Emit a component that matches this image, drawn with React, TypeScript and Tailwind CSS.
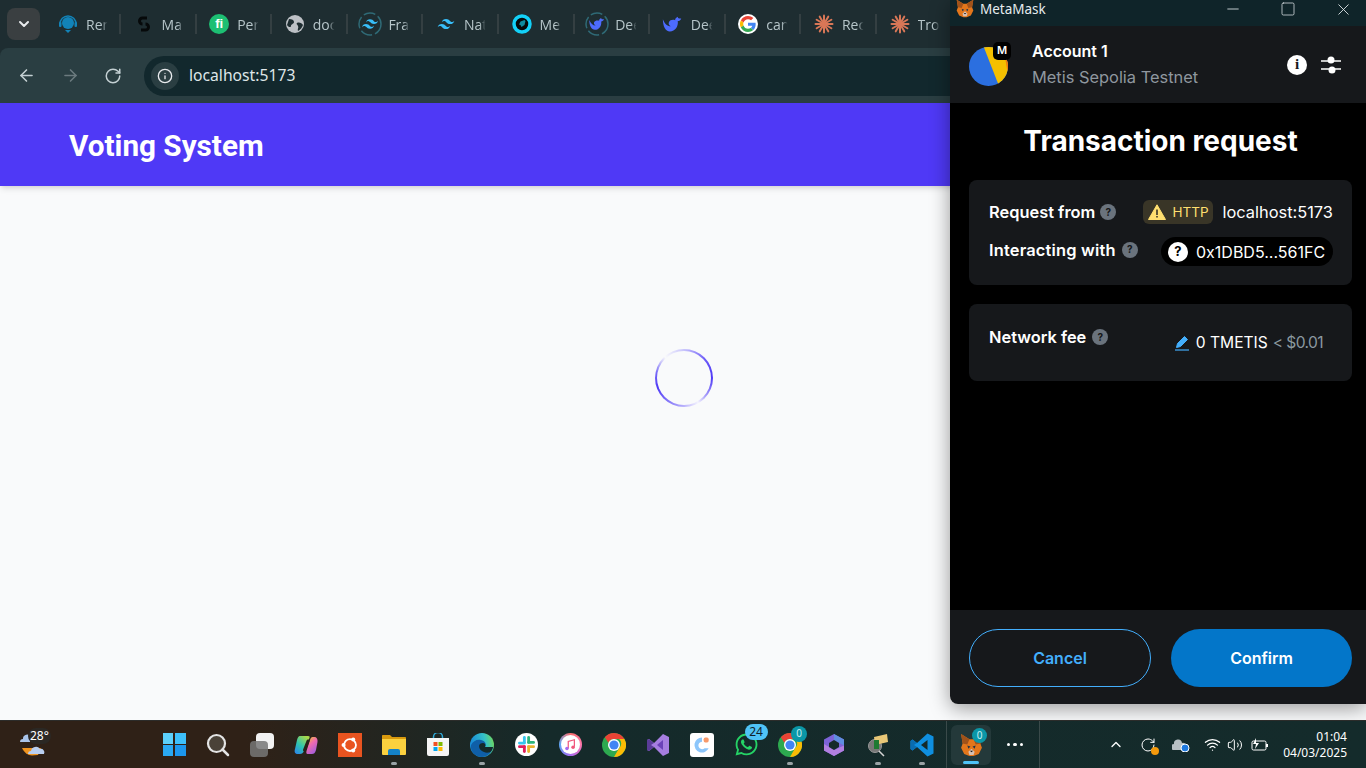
import React from "react";
import { ArrowLeft, ArrowRight, ChevronDown, ChevronUp, Info, Minus, RotateCw, Square, Volume2, Wifi, X } from "lucide-react";
import { FaWhatsapp } from "react-icons/fa";

const Dot = ({ c, x, y, r }: { c: string; x: number; y: number; r: number }) => <circle cx={x} cy={y} r={r} fill={c} />;

const Headset = () => (
  <svg viewBox="0 0 20 20" className="w-5 h-5">
    <circle cx="10" cy="9" r="6" fill="#1283b8" />
    <path d="M2 10a8 8 0 0 1 16 0" fill="none" stroke="#1283b8" strokeWidth="1.5" />
    <path d="M7 16l3 3 3-3z" fill="#1283b8" />
    <rect x="1" y="8" width="2.5" height="5" rx="1" fill="#1283b8" />
    <rect x="16.5" y="8" width="2.5" height="5" rx="1" fill="#1283b8" />
  </svg>
);

const DarkS = () => (
  <svg viewBox="0 0 20 20" className="w-5 h-5">
    <path d="M13 4H8.5a2.5 2.5 0 0 0 0 6M7 16h4.500a2.500 2.500 0 0 0 0-6" fill="none" stroke="#06090a" strokeWidth="3" />
  </svg>
);

const Fiverr = () => (
  <div className="w-5 h-5 rounded-full bg-[#1dbf73] text-white flex items-center justify-center font-bold text-[13px] font-['Liberation_Sans',sans-serif]">
    fi
  </div>
);

const Globe = () => (
  <svg viewBox="0 0 20 20" className="w-5 h-5">
    <circle cx="10" cy="10" r="9" fill="#bdc1c6" />
    <path d="M4 5c3 0 5 1 5 3s-3 2-3 4-3 1-4-1zM12 9c2-1 5 0 6 2-1 3-3 5-5 6-1-2 1-3 0-5s-2-2-1-3z" fill="#1e2d31" />
  </svg>
);

const twPath =
  "M12 6c-2.667 0-4.333 1.333-5 4 1-1.333 2.167-1.833 3.500-1.500.761.190 1.305.742 1.906 1.352C13.387 10.848 14.522 12 17 12c2.667 0 4.333-1.333 5-4-1 1.333-2.167 1.833-3.500 1.500-.761-.190-1.305-.742-1.906-1.352C15.613 7.152 14.478 6 12 6zM7 12c-2.667 0-4.333 1.333-5 4 1-1.333 2.167-1.833 3.500-1.500.761.190 1.305.742 1.906 1.352C8.387 16.848 9.522 18 12 18c2.667 0 4.333-1.333 5-4-1 1.333-2.167 1.833-3.500 1.500-.761-.190-1.305-.742-1.906-1.352C10.613 13.152 9.478 12 7 12z";

const Tailwind = ({ ring }: { ring?: boolean }) => (
  <svg viewBox="0 0 24 24" className={ring ? "w-6 h-6" : "w-5 h-5"}>
    {ring && <circle cx="12" cy="12" r="11" fill="none" stroke="#2f6a76" strokeWidth="1.500" strokeDasharray="12 3" />}
    <path d={twPath} fill="#38bdf8" transform={ring ? "translate(2.400 2.400) scale(0.8)" : undefined} />
  </svg>
);

const Rocket = () => (
  <svg viewBox="0 0 20 20" className="w-5 h-5">
    <circle cx="10" cy="10" r="8" fill="#06090a" stroke="#13d0f7" strokeWidth="3.500" />
    <path d="M12.500 6l1 1-1 4-3 2-1-2-1.500-.5 1.500-3z" fill="#0f8a9e" />
  </svg>
);

const whalePath = "M1 6c2 5 5 8 9 8-2-1-3-3-2-5 1-2 4-3 7-2 0-2 1-3 3-4 0 2 1 2 4 2-1 2-2 3-4 3 1 6-3 12-9 12-5 0-8-6-8-14z";

const Whale = ({ ring }: { ring?: boolean }) => (
  <svg viewBox="0 0 24 24" className={ring ? "w-6 h-6" : "w-[21px] h-[21px]"}>
    {ring && <circle cx="12" cy="12" r="11" fill="none" stroke="#2f6a76" strokeWidth="1.500" strokeDasharray="12 3" />}
    <path d={whalePath} fill="#4d6bfe" transform={ring ? "translate(3.600 3.800) scale(0.7)" : undefined} />
  </svg>
);

const GoogleG = () => (
  <div className="w-5 h-5 rounded-full bg-white flex items-center justify-center">
    <svg viewBox="0 0 48 48" className="w-4 h-4">
      <path fill="#EA4335" d="M24 9.500c3.500 0 6.700 1.200 9.200 3.600l6.900-6.900C35.900 2.400 30.500 0 24 0 14.600 0 6.500 5.400 2.600 13.200l8 6.200C12.400 13.700 17.700 9.500 24 9.500z" />
      <path fill="#4285F4" d="M47 24.500c0-1.600-.1-3.100-.4-4.500H24v9h12.900c-.6 3-2.200 5.400-4.700 7.100l7.700 6C44.400 38 47 31.800 47 24.500z" />
      <path fill="#FBBC05" d="M10.500 28.600a14.500 14.500 0 0 1 0-9.200l-8-6.200a24 24 0 0 0 0 21.600z" />
      <path fill="#34A853" d="M24 48c6.500 0 11.900-2.100 15.900-5.900l-7.700-6c-2.200 1.400-5 2.300-8.200 2.300-6.300 0-11.600-4.200-13.500-10l-8 6.200C6.500 42.600 14.600 48 24 48z" />
    </svg>
  </div>
);

const Claude = () => (
  <svg viewBox="0 0 20 20" className="w-5 h-5">
    {[0, 30, 60, 90, 120, 150, 180, 210, 240, 270, 300, 330].map((a) => (
      <rect key={a} x="9" y="0.500" width="2" height="9.500" rx="1" fill="#d97757" transform={`rotate(${a} 10 10)`} />
    ))}
  </svg>
);

const tabs: { icon: React.ReactNode; label: string }[] = [
  { icon: <Headset />, label: "Ren" },
  { icon: <DarkS />, label: "Ma" },
  { icon: <Fiverr />, label: "Per" },
  { icon: <Globe />, label: "doc" },
  { icon: <Tailwind ring />, label: "Fra" },
  { icon: <Tailwind />, label: "Nat" },
  { icon: <Rocket />, label: "Me" },
  { icon: <Whale ring />, label: "Dee" },
  { icon: <Whale />, label: "Dee" },
  { icon: <GoogleG />, label: "can" },
  { icon: <Claude />, label: "Rec" },
  { icon: <Claude />, label: "Tro" },
];

const TabStrip = () => (
  <div className="h-[48px] bg-[#1e2d31] flex items-center pl-[7px] shrink-0">
    <div className="w-[33px] h-[32px] rounded-lg bg-[#3a3f41] flex items-center justify-center mr-[16px]">
      <ChevronDown size={16} strokeWidth={3} color="#e8eaed" />
    </div>
    {tabs.map((t, i) => (
      <div key={i} className="w-[75.600px] h-[24px] flex items-center shrink-0">
        <div className="w-[24px] flex justify-center shrink-0">{t.icon}</div>
        <div className="ml-[6px] w-[24px] whitespace-nowrap text-[14px] text-[#b6c5c9] font-['Open_Sans',sans-serif] [mask-image:linear-gradient(to_right,black_65%,transparent_90%)]">
          {t.label}
        </div>
        {i < tabs.length - 1 && <div className="ml-[9px] w-[2px] h-[20px] bg-[#343f42]" />}
      </div>
    ))}
  </div>
);

const Toolbar = () => (
  <div className="h-[55px] bg-[#1e2d31] shrink-0">
    <div className="h-full rounded-t-lg bg-[#2a3e42] flex items-center pl-[17px]">
      <ArrowLeft size={19} color="#c4d0d3" strokeWidth={2} />
      <ArrowRight size={19} color="#6b7a7e" strokeWidth={2} className="ml-[25px]" />
      <RotateCw size={18} color="#c4d0d3" strokeWidth={2} className="ml-[24px]" />
      <div className="ml-[22px] flex-1 h-[40px] rounded-full bg-[#12282d] flex items-center pl-[7px] text-[15.700px] text-[#dfe6e8] font-['Noto_Sans',sans-serif]">
        <div className="w-[28px] h-[28px] rounded-full bg-[#2a3e42] flex items-center justify-center mr-[10px]">
          <Info size={16} color="#e8eaed" strokeWidth={2} />
        </div>
        <span>localhost:5173</span>
      </div>
    </div>
  </div>
);

const Spinner = () => (
  <div className="w-[58px] h-[58px] rounded-full p-[2px] bg-[conic-gradient(#c8c4fc_0deg,#6a58f8_50deg,#4f39f6_90deg,#a89ffa_130deg,#f4f3fe_150deg,#b0a8fb_185deg,#4f39f6_250deg,#7567f8_280deg,#f9fafb_318deg,#c8c4fc_360deg)]">
    <div className="w-full h-full rounded-full bg-[#f9fafb]" />
  </div>
);

const Help = () => (
  <div className="w-[16px] h-[16px] rounded-full bg-[#6a737d] flex items-center justify-center text-[10px] font-bold text-[#141618]">?</div>
);

const Fox = ({ size }: { size: number }) => (
  <svg viewBox="0 0 24 24" width={size} height={size}>
    <path d="M2 2l8 5h4l8-5-1.500 9 1.500 4-3 6-5 2h-4l-5-2-3-6 1.500-4z" fill="#e2761b" />
    <path d="M2 2l8 5-2 5-4.500-1zM22 2l-8 5 2 5 4.500-1z" fill="#a0521a" />
    <path d="M8 13l3 1-2 2zM16 13l-3 1 2 2z" fill="#233447" />
    <path d="M9 19l3-3 3 3-1 3h-4z" fill="#d7c1b3" />
    <path d="M10.500 18h3l-1.500 1.500z" fill="#161616" />
  </svg>
);

const Avatar = () => (
  <svg viewBox="0 0 39 39" className="w-full h-full">
    <defs>
      <clipPath id="av">
        <circle cx="19.500" cy="19.500" r="19.500" />
      </clipPath>
    </defs>
    <g clipPath="url(#av)">
      <rect width="39" height="39" fill="#2b6fe0" />
      <path d="M14 -2L30 39H42V-2z" fill="#f5c000" />
      <path d="M36 10L42 8V30L38 22z" fill="#f0780f" />
    </g>
  </svg>
);

const MetaMaskWindow = () => (
  <div className="absolute left-[950px] top-0 w-[416px] h-[704px] flex flex-col rounded-bl-lg overflow-hidden shadow-[0_4px_20px_rgba(0,0,0,0.4)] font-['Inter',sans-serif] text-white">
    <div className="h-[26px] bg-[#0f2429] flex items-start shrink-0 pl-[5px] text-[#e6ecee] font-['Noto_Sans',sans-serif] text-[13.500px]">
      <div className="mt-[-2px]"><Fox size={20} /></div>
      <span className="ml-[5px] leading-[18px]">MetaMask</span>
      <div className="ml-auto flex items-center h-[18px] mr-[-5px]">
        <div className="w-[55px] flex justify-center"><Minus size={18} strokeWidth={1.100} /></div>
        <div className="w-[55px] flex justify-center mr-[1px]"><Square size={16} strokeWidth={1.100} /></div>
        <div className="w-[55px] flex justify-center"><X size={19} strokeWidth={1.100} /></div>
      </div>
    </div>
    <div className="h-[77px] bg-[#16181b] flex items-center shrink-0 pl-[19px] pr-[24px]">
      <div className="relative w-[39px] h-[39px] mt-[3px]">
        <Avatar />
        <div className="absolute left-[24px] top-[-5px] w-[18px] h-[18px] rounded-[5px] bg-black flex items-center justify-center text-[11px] font-semibold">M</div>
      </div>
      <div className="ml-[24px] mb-[2px] flex flex-col gap-[6px]">
        <div className="text-[16px] font-semibold leading-[20px]">Account 1</div>
        <div className="text-[16.400px] text-[#8f979f] leading-[20px]">Metis Sepolia Testnet</div>
      </div>
      <div className="ml-auto flex items-center gap-[11px]">
        <div className="mr-[2px] w-[20px] h-[20px] rounded-full bg-white text-[#16181b] flex items-center justify-center text-[15px] font-bold font-['Liberation_Serif',serif]">i</div>
        <svg viewBox="0 0 22 20" className="w-[22px] h-[20px]">
          <path d="M1 6h20M1 14h20" stroke="#fff" strokeWidth="1.500" />
          <circle cx="11" cy="5" r="3.500" fill="#fff" />
          <circle cx="12" cy="15" r="3.500" fill="#fff" />
        </svg>
      </div>
    </div>
    <div className="flex-1 bg-black px-[19px] pr-[14px]">
      <h1 className="text-center text-[28px] font-bold leading-[34px] mt-[21px] mb-[22px]">Transaction request</h1>
      <div className="h-[105px] rounded-lg bg-[#16181b] px-[20px] pt-[20px] text-[16.400px]">
        <div className="flex items-center h-[24px]">
          <span className="font-semibold">Request from</span>
          <span className="ml-[5px]"><Help /></span>
          <div className="ml-auto h-[24px] w-[70px] rounded-md bg-[#393527] flex items-center justify-center gap-[6px] text-[13.500px] text-[#ffdf70]">
            <svg viewBox="0 0 18 16" className="w-[18px] h-[16px]">
              <path d="M9 .800L17.500 15.500H.500z" fill="#ffdf70" stroke="#ffdf70" strokeLinejoin="round" />
              <path d="M8.200 5.500h1.600v5.500H8.200zM8.200 12h1.600v1.600H8.200z" fill="#393527" />
            </svg>
            HTTP
          </div>
          <span className="ml-[9px] mr-[-1px]">localhost:5173</span>
        </div>
        <div className="flex items-center h-[29px] mt-[13px]">
          <div className="flex items-center mb-[3px]">
            <span className="font-semibold tracking-[0.2px]">Interacting with</span>
            <span className="ml-[6px]"><Help /></span>
          </div>
          <div className="ml-auto h-[29px] w-[172px] rounded-full bg-black flex items-center pl-[7px] mr-[-1px] text-[16px]">
            <div className="w-[20px] h-[20px] rounded-full bg-white text-black flex items-center justify-center text-[13px] font-bold">?</div>
            <span className="ml-[8px]">0x1DBD5...561FC</span>
          </div>
        </div>
      </div>
      <div className="h-[77px] mt-[19px] rounded-lg bg-[#16181b] px-[20px] pt-[21px] flex items-start text-[16.400px]">
        <span className="font-semibold leading-[24px]">Network fee</span>
        <span className="ml-[6px] mt-[4px]"><Help /></span>
        <div className="ml-auto mt-[6px] flex items-center mr-[9px] leading-[24px] text-[15.600px]">
          <svg viewBox="0 0 16 16" className="w-[16px] h-[16px] mr-[6px]">
            <path d="M10.500 1.500l3 3L6.500 11.500 2.500 12.500l1-4z" fill="#43aefc" stroke="#43aefc" strokeLinejoin="round" />
            <path d="M1 15h14" stroke="#43aefc" strokeWidth="1.200" />
          </svg>
          <span>0 TMETIS</span>
          <span className="ml-[5px] text-[#8b99a0] tracking-[-0.600px]">&lt; $0.01</span>
        </div>
      </div>
    </div>
    <div className="h-[94px] bg-[#16181b] shrink-0 px-[19px] pr-[14px] pt-[19px] flex gap-[20px]">
      <button className="w-[182px] h-[58px] rounded-full border border-[#43aefc] text-[#43aefc] font-semibold text-[16px]">Cancel</button>
      <button className="w-[181px] h-[58px] rounded-full bg-[#0376c9] text-white font-semibold text-[16px]">Confirm</button>
    </div>
  </div>
);

const Pin = () => <div className="absolute bottom-[3px] left-1/2 -translate-x-1/2 w-[6px] h-[3px] rounded-full bg-[#9aa3a6]" />;

const Badge = ({ n, cls }: { n: string; cls: string }) => (
  <div className={`absolute flex items-center justify-center rounded-full text-[12px] font-['Noto_Sans',sans-serif] ${cls}`}>{n}</div>
);

const ChromeLogo = () => (
  <svg viewBox="0 0 24 24" className="w-6 h-6">
    <circle cx="12" cy="12" r="12" fill="#2da94f" />
    <path d="M12 0a12 12 0 0 1 10.400 6H12a6 6 0 0 0-5.600 3.800L2.800 4.300A12 12 0 0 1 12 0z" fill="#ea4335" />
    <path d="M22.400 6A12 12 0 0 1 12 24l5.200-9a6 6 0 0 0 0-9z" fill="#fbbc05" />
    <circle cx="12" cy="12" r="6" fill="#fff" />
    <circle cx="12" cy="12" r="4.600" fill="#4285f4" />
  </svg>
);

const taskIcons: { el: React.ReactNode; pin?: boolean }[] = [
  {
    el: (
      <div className="grid grid-cols-2 gap-[1.500px] w-[23px] h-[23px]">
        <div className="bg-[#5cd0fb]" /><div className="bg-[#3dc0fb]" /><div className="bg-[#2aa9f3]" /><div className="bg-[#1c97ee]" />
      </div>
    ),
  },
  {
    el: (
      <svg viewBox="0 0 24 24" className="w-6 h-6">
        <circle cx="10.500" cy="10.500" r="8.500" fill="#4a4238" stroke="#e4e4e4" strokeWidth="2.200" />
        <path d="M16.500 16.500L22 22" stroke="#e4e4e4" strokeWidth="2.500" strokeLinecap="round" />
      </svg>
    ),
  },
  {
    el: (
      <div className="relative w-[24px] h-[24px]">
        <div className="absolute right-0 top-0 w-[18px] h-[16px] rounded-sm bg-[#f2f2f2]" />
        <div className="absolute left-0 bottom-0 w-[18px] h-[16px] rounded-sm bg-[#777777]/85" />
      </div>
    ),
  },
  {
    el: (
      <svg viewBox="0 0 24 24" className="w-6 h-6">
        <defs>
          <linearGradient id="cpa" x1="0" y1="1" x2="0.700" y2="0">
            <stop offset="0" stopColor="#2b7ff0" />
            <stop offset="0.500" stopColor="#2ec4b0" />
            <stop offset="1" stopColor="#a8d84a" />
          </linearGradient>
          <linearGradient id="cpb" x1="0.200" y1="0" x2="0.800" y2="1">
            <stop offset="0" stopColor="#f0c030" />
            <stop offset="0.400" stopColor="#f06ab0" />
            <stop offset="1" stopColor="#9a5ce0" />
          </linearGradient>
        </defs>
        <path d="M6 3h8c2 0 2 1 1 3l-5 12c-1 2-2 3-4 3H4c-3 0-4-2-3-5l2-9c.5-2 1.500-4 3-4z" fill="url(#cpa)" />
        <path d="M13 21h5c2 0 3-1 4-4l1.500-8c.5-3-1-5-3-5h-2c-1 0-2 1-2.500 3l-3.500 11c-.5 2 0 3 1 3z" fill="url(#cpb)" />
        <path d="M14 8l-3.500 9" stroke="#2a2118" strokeWidth="3" strokeLinecap="round" />
      </svg>
    ),
  },
  {
    el: (
      <div className="w-[24px] h-[24px] bg-[#e95420] flex items-center justify-center">
        <svg viewBox="0 0 24 24" className="w-[22px] h-[22px]">
          <circle cx="12" cy="12" r="6.500" fill="none" stroke="#fff" strokeWidth="2" />
          <Dot c="#fff" x={5} y={12} r={2.200} />
          <Dot c="#fff" x={15.500} y={6} r={2.200} />
          <Dot c="#fff" x={15.500} y={18} r={2.200} />
        </svg>
      </div>
    ),
  },
  {
    pin: true,
    el: (
      <svg viewBox="0 0 24 24" className="w-6 h-6">
        <path d="M0 3c0-.6.400-1 1-1h7l2 2h13c.6 0 1 .400 1 1v4H0z" fill="#d99a0e" />
        <path d="M0 6h24v15a1 1 0 0 1-1 1H1a1 1 0 0 1-1-1z" fill="#fbd13f" />
        <path d="M6 18a2 2 0 0 1 2-2h8a2 2 0 0 1 2 2v4H6z" fill="#1482c8" />
      </svg>
    ),
  },
  {
    el: (
      <svg viewBox="0 0 24 24" className="w-6 h-6">
        <path d="M7.500 6V4a4.500 4.500 0 0 1 9 0v2" fill="none" stroke="#2fa9d8" strokeWidth="1.500" />
        <path d="M1 5h22v16a2 2 0 0 1-2 2H3a2 2 0 0 1-2-2z" fill="#f5f5f5" />
        <rect x="7.500" y="9" width="4" height="4" fill="#f25022" />
        <rect x="12.500" y="9" width="4" height="4" fill="#7fba00" />
        <rect x="7.500" y="14" width="4" height="4" fill="#00a4ef" />
        <rect x="12.500" y="14" width="4" height="4" fill="#ffb900" />
      </svg>
    ),
  },
  {
    pin: true,
    el: (
      <svg viewBox="0 0 24 24" className="w-6 h-6">
        <defs>
          <linearGradient id="edg" x1="0.100" y1="0.500" x2="1" y2="0.300">
            <stop offset="0" stopColor="#1a8ed8" />
            <stop offset="0.600" stopColor="#35c1c8" />
            <stop offset="1" stopColor="#6fd85c" />
          </linearGradient>
        </defs>
        <circle cx="12" cy="12" r="12" fill="url(#edg)" />
        <path d="M1 12c2-4 6-6 10-5 4 1 6 4 4 7h8c-1 6-6 10-11 10C5 24 0 18 1 12z" fill="#0f5fa8" />
        <path d="M9 13c0-2 2-3 4-3 2 0 3 2 2 4h8c-.5 2-1 3-2 4.500-2 1.500-5 1.500-7 .5-3-1-5-3-5-6z" fill="#152a2a" />
      </svg>
    ),
  },
  {
    el: (
      <div className="w-[23px] h-[23px] rounded-full bg-white flex items-center justify-center">
        <svg viewBox="0 0 24 24" className="w-[17px] h-[17px]">
          <g strokeWidth="4" strokeLinecap="round">
            <path d="M9 2v7" stroke="#36c5f0" />
            <path d="M2 10h7" stroke="#36c5f0" />
            <path d="M15 2v7" stroke="#2eb67d" />
            <path d="M22 9h-7" stroke="#2eb67d" />
            <path d="M15 22v-7" stroke="#ecb22e" />
            <path d="M22 15h-7" stroke="#ecb22e" />
            <path d="M9 22v-7" stroke="#e01e5a" />
            <path d="M2 15h7" stroke="#e01e5a" />
          </g>
        </svg>
      </div>
    ),
  },
  {
    el: (
      <div className="w-[23px] h-[23px] rounded-full bg-[conic-gradient(#fb6f6f,#ff77aa,#a66bf0,#5aa7f5,#fb6f6f)] p-[2px]">
        <div className="w-full h-full rounded-full bg-white flex items-center justify-center">
          <svg viewBox="0 0 16 16" className="w-[14px] h-[14px]">
            <path d="M6 12V4l7-2v8" fill="none" stroke="#f0577c" strokeWidth="1.400" />
            <circle cx="4.500" cy="12" r="2" fill="#a66bf0" />
            <circle cx="11.500" cy="10.500" r="2" fill="#f0577c" />
          </svg>
        </div>
      </div>
    ),
  },
  { el: <ChromeLogo /> },
  {
    el: (
      <svg viewBox="0 0 24 24" className="w-6 h-6">
        <path d="M17 1l6 3v16l-6 3-9-9-5 4-2-1V7l2-1 5 4z" fill="#a67ee0" />
        <path d="M17 7v10l-6-5z" fill="#6b42b8" />
        <path d="M1 7l2-1 5 4-3 2 3 2-5 4-2-1z" fill="#5a3c98" />
      </svg>
    ),
  },
  {
    el: (
      <div className="w-[24px] h-[24px] rounded-[3px] bg-white flex items-center justify-center">
        <svg viewBox="0 0 24 24" className="w-[20px] h-[20px]">
          <path d="M12 3a9 9 0 1 0 8 13h-5a4.500 4.500 0 1 1-3-8z" fill="#8cc6fb" />
          <rect x="14" y="3" width="6" height="6" rx="2" fill="#f79a6b" />
        </svg>
      </div>
    ),
  },
  {
    el: (
      <div className="relative">
        <FaWhatsapp size={25} color="#25d366" />
        <Badge n="24" cls="left-[11px] top-[-8px] w-[23px] h-[16px] bg-[#4fc3f7] text-[#10202a]" />
      </div>
    ),
  },
  {
    pin: true,
    el: (
      <div className="relative">
        <ChromeLogo />
        <Badge n="0" cls="left-[13px] top-[-7px] w-[16px] h-[16px] bg-[#0b97a7] text-[#c5eef2] !text-[10px]" />
      </div>
    ),
  },
  {
    el: (
      <svg viewBox="0 0 24 24" className="w-6 h-6">
        <path d="M12 1l10 5.500v11L12 23 2 17.500v-11z" fill="#7d63d8" />
        <path d="M12 1l10 5.500v6L12 7z" fill="#5f8de0" />
        <path d="M2 11l10 6 10-4.500v5L12 23 2 17.500z" fill="#b27fe0" />
        <path d="M12 7l5 3v4l-5 3-5-3v-4z" fill="#152a2a" />
      </svg>
    ),
  },
  {
    pin: true,
    el: (
      <svg viewBox="0 0 24 24" className="w-6 h-6">
        <circle cx="9" cy="13" r="6.500" fill="#777" stroke="#999" />
        <path d="M13 18l5 5" stroke="#d5d5d5" strokeWidth="1.500" />
        <path d="M8 4l13-3 1 8-13 3z" fill="#e8c777" />
        <rect x="8" y="7" width="5" height="9" fill="#1e7a32" />
      </svg>
    ),
  },
  {
    pin: true,
    el: (
      <svg viewBox="0 0 24 24" className="w-6 h-6">
        <path d="M17.500 0.500L23.500 3.500v17l-6 3L7 14l-4.500 3.500L0.500 16V8l2-1.500L7 10z" fill="#0f8fe0" />
        <path d="M17.500 7L11 12l6.500 5z" fill="#152a2a" />
        <path d="M0.500 8l2-1.500L7 10l-3 2 3 2-4.500 3.500-2-1.500z" fill="#0a6cb0" />
      </svg>
    ),
  },
];

const Taskbar = () => (
  <div className="absolute left-0 right-0 top-[720px] h-[48px] flex items-center bg-[linear-gradient(to_right,#2f2117_0%,#2f2117_18%,#152a2a_40%,#142b2b_100%)] border-t border-[#2c2c2a] text-white">
    <div className="relative w-[152px] h-full shrink-0">
      <div className="absolute left-[19px] top-[7px] w-[28px] h-[32px]">
        <svg viewBox="0 0 28 32" className="w-[28px] h-[32px]">
          <path d="M1 14a3 3 0 0 1 3-3 4 4 0 0 1 7-3v6z" fill="#a9c4ea" />
          <path d="M3 20h19l-3 7-6 .500c-4 0-8-3-10-7.500z" fill="#f0941f" />
          <path d="M9 26a3 3 0 0 1 3-3 5 5 0 0 1 9-2 3.500 3.500 0 0 1 4 5z" fill="#b9cff0" />
        </svg>
        <div className="absolute left-[9px] top-0 h-[16px] px-[2px] rounded-full bg-[#2b2824] text-[12px] leading-[16px] font-['Noto_Sans',sans-serif]">28°</div>
      </div>
    </div>
    {taskIcons.map((t, i) => (
      <div key={i} className="relative w-[44px] h-full flex items-center justify-center shrink-0">
        {t.el}
        {t.pin && <Pin />}
      </div>
    ))}
    <div className="w-px h-full bg-[#3a4a4a] ml-[2px] shrink-0" />
    <div className="relative ml-[4px] w-[40px] h-[40px] rounded-md bg-[#24393a] flex items-center justify-center shrink-0">
      <Fox size={25} />
      <Badge n="0" cls="left-[21px] top-[3px] w-[15px] h-[15px] bg-[#0b97a7] text-[#c5eef2] !text-[10px]" />
      <div className="absolute bottom-[1px] left-1/2 -translate-x-1/2 w-[16px] h-[3px] rounded-full bg-[#4fc3f7]" />
    </div>
    <div className="w-[48px] flex justify-center gap-[3px] shrink-0">
      <span className="w-[3.500px] h-[3.500px] rounded-full bg-white" />
      <span className="w-[3.500px] h-[3.500px] rounded-full bg-white" />
      <span className="w-[3.500px] h-[3.500px] rounded-full bg-white" />
    </div>
    <div className="w-px h-full bg-[#3a4a4a] shrink-0" />
    <div className="ml-[68px] w-[16px] flex justify-center"><ChevronUp size={17} strokeWidth={2} /></div>
    <div className="relative ml-[16px] w-[16px] h-[16px] flex items-center justify-center">
      <RotateCw size={16} strokeWidth={1.500} />
      <span className="absolute right-[-3px] bottom-[-2px] w-[8px] h-[8px] rounded-full bg-[#f59a0c]" />
    </div>
    <div className="relative ml-[16px] w-[16px]">
      <svg viewBox="0 0 18 14" className="w-[18px] h-[14px]">
        <path d="M2 12a3 3 0 0 1 0-6 4 4 0 0 1 8-1 3 3 0 0 1 4 3l-1 4z" fill="#b8c0c4" />
        <circle cx="13" cy="10" r="4" fill="#1f7ae0" stroke="#fff" strokeWidth="1" />
      </svg>
    </div>
    <div className="ml-[16px]"><Wifi size={17} strokeWidth={1.800} /></div>
    <div className="ml-[6px]"><Volume2 size={16} strokeWidth={1.500} /></div>
    <div className="ml-[8px]">
      <svg viewBox="0 0 18 14" className="w-[18px] h-[14px]">
        <rect x="1" y="3" width="14" height="9" rx="1.500" fill="none" stroke="#fff" strokeWidth="1" />
        <rect x="15" y="6" width="2" height="3" fill="#fff" />
        <path d="M5 0L2 6h3l-1 5 4-6H5z" fill="#fff" />
      </svg>
    </div>
    <div className="ml-auto mr-[19px] flex flex-col items-end text-[12px] leading-[16px] font-['Noto_Sans',sans-serif]">
      <span>01:04</span>
      <span>04/03/2025</span>
    </div>
  </div>
);

export default function App() {
  return (
    <div className="relative w-[1366px] h-[768px] overflow-hidden flex flex-col bg-[#f9fafb]">
      <TabStrip />
      <Toolbar />
      <div className="h-[83px] shrink-0 bg-[#4f39f6] shadow-md flex items-center pl-[69px] text-white text-[29.700px] font-bold font-['Roboto',sans-serif]">
        <span className="mt-[3px]">Voting System</span>
      </div>
      <div className="flex-1 flex justify-center pt-[163px] pl-[2px]">
        <Spinner />
      </div>
      <MetaMaskWindow />
      <Taskbar />
    </div>
  );
}
